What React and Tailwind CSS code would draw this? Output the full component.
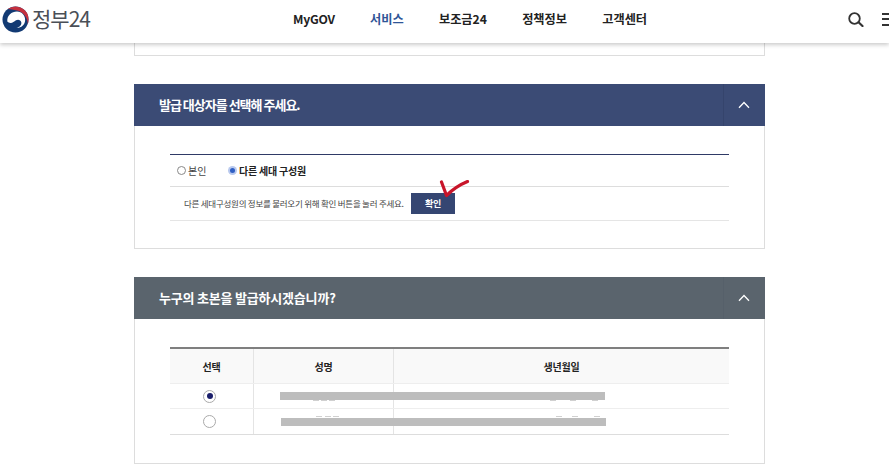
const font = { fontFamily: '"Noto Sans CJK KR", "Noto Sans", sans-serif' };

const Chevron = () => (
  <svg width="12" height="8" viewBox="0 0 12 8" fill="none" stroke="#ffffff" strokeWidth="1.3">
    <path d="M1 6.800 6 1.500 11 6.800" />
  </svg>
);

const Logo = () => (
  <svg width="27" height="27" viewBox="0 0 28 28">
    <circle cx="14" cy="14" r="13.500" fill="#123a73" />
    <path d="M6 3.200A13.500 13.500 0 0 1 27.500 14.500c0 1.500-.3 3-.8 4.300C26.800 11 21 5.400 14.500 4.300 11.500 3.800 8.500 3.500 6 3.200Z" fill="#c5303e" />
    <path d="M5.500 16C5 10 10 5.800 15.500 5.800c5.200 0 8.800 4.200 8.500 9.200-.3 5-4.800 8-9 7.500 3.500-.5 5.500-3 5-5.700-.5-2.300-3.300-3.500-5.500-2-2 1.500-3.800 3-5.700 2.800C7.400 17.500 6.300 16.800 5.500 16Z" fill="#ffffff" />
  </svg>
);

const SearchIcon = () => (
  <svg width="16" height="15" viewBox="0 0 16 15" fill="none" stroke="#333333" strokeLinecap="round">
    <circle cx="6.500" cy="6.500" r="5.300" strokeWidth="1.800" />
    <path d="M10.800 10.500 14.500 14" strokeWidth="2.200" />
  </svg>
);

const Header = () => (
  <header className="relative z-10 flex h-[43px] w-full items-center bg-white pb-[5px] shadow-[0_2px_4px_rgba(0,0,0,0.2)]">
    <div className="flex w-[293px] items-center pl-[2px]">
      <Logo />
      <span className="ml-[3px] text-[21px] tracking-[-1px] text-[#4a4f57]">정부24</span>
    </div>
    <nav className="flex items-center gap-[35.200px] text-[12.200px] font-bold text-[#222222]">
      <span className="tracking-[-0.2px]">MyGOV</span>
      <span className="text-[#2f5597]">서비스</span>
      <span>보조금24</span>
      <span>정책정보</span>
      <span>고객센터</span>
    </nav>
    <div className="ml-auto flex items-center gap-[18px]">
      <SearchIcon />
      <div className="flex w-[7px] flex-col gap-[3.500px] overflow-hidden">
        <div className="h-[2px] w-[14px] bg-[#333333]"></div>
        <div className="h-[2px] w-[14px] bg-[#333333]"></div>
        <div className="h-[2px] w-[14px] bg-[#333333]"></div>
      </div>
    </div>
  </header>
);

const SectionHead = ({ title, color, tracking, divider }) => (
  <div className={`mx-[-1px] flex h-[42px] items-center justify-between ${color}`}>
    <h2 className={`pl-[25px] text-[13px] font-bold text-white ${tracking}`}>{title}</h2>
    <div className={`flex h-full w-[42px] items-center justify-center border-l pr-[1px] ${divider}`}>
      <Chevron />
    </div>
  </div>
);

const SmallRadio = ({ checked }) =>
  checked ? (
    <span className="flex h-[9px] w-[9px] items-center justify-center rounded-full bg-[#b9c9ee]">
      <span className="h-[5px] w-[5px] rounded-full bg-[#2f5fc4]"></span>
    </span>
  ) : (
    <span className="h-[9px] w-[9px] rounded-full border border-[#888888] bg-white"></span>
  );

const LargeRadio = ({ checked }) => (
  <span className="flex h-[13px] w-[13px] items-center justify-center rounded-full border border-[#aaaaaa] bg-white">
    {checked && <span className="h-[6px] w-[6px] rounded-full bg-[#1b1f6b]"></span>}
  </span>
);

const TargetCard = () => (
  <section className="border-x border-b border-[#dddddd]">
    <SectionHead
      title="발급 대상자를 선택해 주세요."
      color="bg-[#3b4b75]"
      tracking="tracking-[-1px]"
      divider="border-[#35446c]"
    />
    <div className="px-[35px] pt-[28px] pb-[27px]">
      <div className="border-t border-[#2f3a66]">
        <div className="flex h-[32px] items-center gap-[22px] border-b border-[#dddddd] pl-[7px] text-[10px]">
          <label className="flex items-center gap-[2px] text-[#444444]">
            <SmallRadio /> 본인
          </label>
          <label className="flex items-center gap-[1.500px] font-bold tracking-[-0.2px] text-[#222222]">
            <SmallRadio checked /> 다른 세대 구성원
          </label>
        </div>
        <div className="relative flex h-[34px] items-center border-b border-[#e5e5e5] pl-[14px] text-[8.500px] tracking-[-0.25px] text-[#444444]">
          <span className="w-[227px]">다른 세대구성원의 정보를 불러오기 위해 확인 버튼을 눌러 주세요.</span>
          <button className="flex h-[21px] w-[44px] items-center justify-center bg-[#354672] text-[9px] font-bold text-white">
            확인
          </button>
          <svg className="absolute left-[269px] top-[-7px]" width="32" height="22" viewBox="0 0 32 22" fill="none">
            <path d="M2.500 2 7.500 15.500C13 10 20 5 28.500 1.500" stroke="#c8152a" strokeWidth="3.200" strokeLinecap="round" strokeLinejoin="round" />
          </svg>
        </div>
      </div>
    </div>
  </section>
);

const people = [
  { checked: true, left: 110, width: 325, marks: [143, 151, 159, 380, 400, 422], markClass: "top-[16px]" },
  { checked: false, left: 111, width: 325, marks: [146, 155, 163, 386, 402, 424], markClass: "top-[7px]" },
];

const PersonCard = () => (
  <section className="border-x border-b border-[#dddddd]">
    <SectionHead
      title="누구의 초본을 발급하시겠습니까?"
      color="bg-[#5a646d]"
      tracking="tracking-[-0.2px]"
      divider="border-[#56606a]"
    />
    <div className="px-[35px] pt-[28px] pb-[28px]">
      <div className="border-t-2 border-[#7f7f7f]">
        <div className="grid h-[35px] grid-cols-[84px_140px_1fr] items-center border-b border-[#eeeeee] bg-[#f9f9f9] text-center text-[10px] font-bold tracking-[-0.2px] text-[#222222]">
          <span className="flex h-full items-center justify-center border-r border-[#e4e4e4]">선택</span>
          <span className="flex h-full items-center justify-center border-r border-[#e4e4e4]">성명</span>
          <span>생년월일</span>
        </div>
        {people.map((p, i) => (
          <div
            key={i}
            className={`relative grid grid-cols-[84px_140px_1fr] ${i === 0 ? "h-[25px] border-b border-[#eeeeee]" : "h-[26px] border-b border-[#dddddd]"}`}
          >
            <span className="flex items-center justify-center border-r border-[#e4e4e4] pr-[4px]">
              <LargeRadio checked={p.checked} />
            </span>
            <span className="border-r border-[#e4e4e4]"></span>
            <span></span>
            <div
              className="absolute top-1/2 h-[8px] -translate-y-1/2 bg-[#bdbdbd]"
              style={{ left: p.left, width: p.width }}
            ></div>
            {p.marks.map((m) => (
              <div
                key={m}
                className={`absolute h-[1px] w-[6px] bg-[#d0d0d0] ${p.markClass}`}
                style={{ left: m }}
              ></div>
            ))}
          </div>
        ))}
      </div>
    </div>
  </section>
);

export default function App() {
  return (
    <div className="h-[467px] w-[889px] overflow-hidden bg-white" style={font}>
      <Header />
      <main className="ml-[134px] flex w-[631px] flex-col gap-[28px]">
        <div className="h-[13px] border-x border-b border-[#dddddd]"></div>
        <TargetCard />
        <PersonCard />
      </main>
    </div>
  );
}
